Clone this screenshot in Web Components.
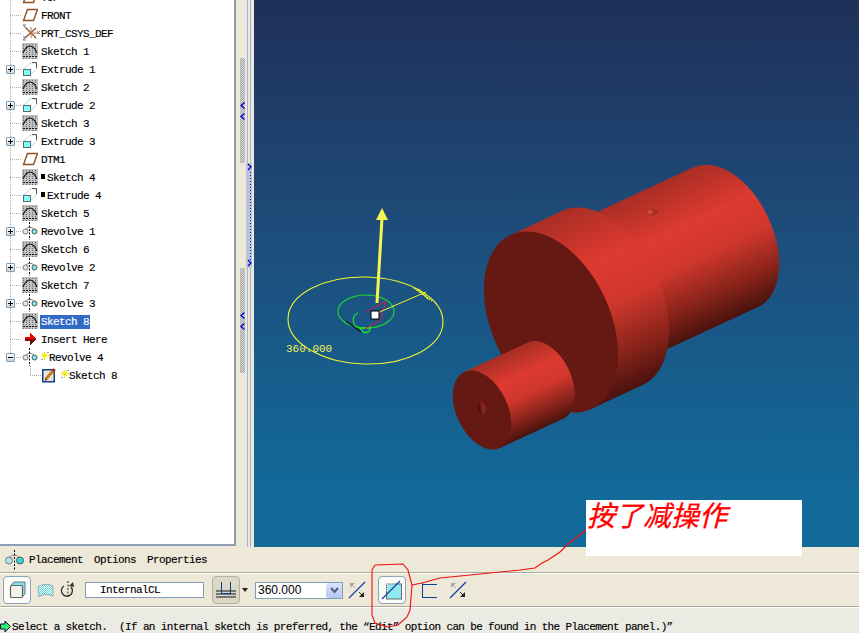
<!DOCTYPE html>
<html><head><meta charset="utf-8"><style>
html,body{margin:0;padding:0;width:859px;height:633px;overflow:hidden;background:#eee8d8}
body{font-family:"Liberation Mono",monospace;font-size:11px;letter-spacing:-.6px;color:#000;-webkit-text-stroke:.15px #000}
</style></head><body>
<cad-app>
  <model-tree slot="tree">
    <tree-row kind="plane" label="TOP"></tree-row>
    <tree-row kind="plane" label="FRONT"></tree-row>
    <tree-row kind="csys" label="PRT_CSYS_DEF"></tree-row>
    <tree-row kind="sketch" label="Sketch 1"></tree-row>
    <tree-row kind="extrude" label="Extrude 1" toggle="plus"></tree-row>
    <tree-row kind="sketch" label="Sketch 2"></tree-row>
    <tree-row kind="extrude" label="Extrude 2" toggle="plus"></tree-row>
    <tree-row kind="sketch" label="Sketch 3"></tree-row>
    <tree-row kind="extrude" label="Extrude 3" toggle="plus"></tree-row>
    <tree-row kind="plane" label="DTM1"></tree-row>
    <tree-row kind="sketch" label="Sketch 4" mark="square"></tree-row>
    <tree-row kind="extrude" label="Extrude 4" mark="square"></tree-row>
    <tree-row kind="sketch" label="Sketch 5"></tree-row>
    <tree-row kind="revolve" label="Revolve 1" toggle="plus"></tree-row>
    <tree-row kind="sketch" label="Sketch 6"></tree-row>
    <tree-row kind="revolve" label="Revolve 2" toggle="plus"></tree-row>
    <tree-row kind="sketch" label="Sketch 7"></tree-row>
    <tree-row kind="revolve" label="Revolve 3" toggle="plus"></tree-row>
    <tree-row kind="sketch" label="Sketch 8" selected></tree-row>
    <tree-row kind="insert" label="Insert Here"></tree-row>
    <tree-row kind="revolve" label="Revolve 4" toggle="minus" mark="star" guide="end"></tree-row>
    <tree-row kind="edit" label="Sketch 8" mark="star" guide="child"></tree-row>
  </model-tree>
  <pane-splitter slot="splitter"></pane-splitter>
  <model-view slot="view"></model-view>
  <dash-tabs slot="tabs"></dash-tabs>
  <dash-toolbar slot="toolbar"></dash-toolbar>
  <status-line slot="status">Select a sketch.  (If an internal sketch is preferred, the “Edit” option can be found in the Placement panel.)”</status-line>
  <red-note slot="note"></red-note>
</cad-app>
<script>
const ICONS = {
 plane:`<svg width="16" height="16" viewBox="0 0 16 16"><path d="M1.500 13.500 5.500 2.500H15.500L11.500 13.500Z" fill="none" stroke="#8f4f22" stroke-width="1.400"/></svg>`,
 csys:`<svg width="18" height="18" viewBox="0 0 18 18" style="margin-right:-2px"><path d="M3 3 14 14M3 14 14 4" stroke="#8a4a20" stroke-width="1.100"/><path d="M9 3V14M9 9H17" stroke="#b0784a" stroke-width="1"/><path d="M1 1h3M1 1l3 3M1 13h3l-3 3h3M15 7l3 3M18 7l-3 3" stroke="#777" stroke-width="1" fill="none"/></svg>`,
 sketch:`<svg width="16" height="16" viewBox="0 0 16 16" shape-rendering="crispEdges"><defs><pattern id="d" width="3" height="2" patternUnits="userSpaceOnUse"><rect width="3" height="2" fill="#c0c0c0"/><rect x="1" y="1" width="1" height="1" fill="#6a6a6a"/></pattern></defs><rect width="16" height="16" fill="url(#d)"/><path d="M1 10Q4 3 8 3T15 10" fill="none" stroke="#111" stroke-width="1.100" shape-rendering="auto"/><path d="M1 13h14" stroke="#111" stroke-dasharray="2 1"/></svg>`,
 extrude:`<svg width="16" height="16" viewBox="0 0 16 16"><path d="M2 8 8 2H14.500V8L8 14" fill="none" stroke="#a9dfe2" stroke-width="1"/><path d="M10 1.500H14.500V7" fill="none" stroke="#555" stroke-width="1"/><rect x="1.500" y="8.500" width="7" height="6" fill="#7fffff" stroke="#666"/></svg>`,
 revolve:`<svg width="16" height="18" viewBox="0 0 16 18"><path d="M3 8.500Q7 2 13 8" fill="none" stroke="#777"/><circle cx="3.500" cy="9.500" r="2.500" fill="#d8eeee" stroke="#777"/><circle cx="12.500" cy="9.500" r="2.500" fill="#7fe6ea" stroke="#555"/><path d="M7.500 0V18" stroke="#000" stroke-dasharray="2 1.500"/></svg>`,
 insert:`<svg width="16" height="16" viewBox="0 0 16 16" shape-rendering="crispEdges"><path d="M3 6H8V2L14 8H3Z" fill="#f00000"/><path d="M3 8H14L8 14V10H3Z" fill="#6e1010"/></svg>`,
 edit:`<svg width="14" height="15" viewBox="0 0 14 15"><rect x=".75" y="1.750" width="11.500" height="12" fill="#e9e4d4" stroke="#123f92" stroke-width="1.500"/><path d="M3.500 11.500 11.500 2.500" stroke="#c9791f" stroke-width="3"/><path d="M11 3 12.500 1.200" stroke="#a02020" stroke-width="3"/><path d="M2.500 13 4 10.500 5 12Z" fill="#222"/></svg>`
};
function def(name, css, html){
  customElements.define(name, class extends HTMLElement{
    constructor(){super();this.attachShadow({mode:"open"});this.shadowRoot.innerHTML=`<style>${css}</style>${typeof html==="function"?"":html}`;}
    connectedCallback(){ if(typeof html==="function"){this.shadowRoot.innerHTML=`<style>${css}</style>${html(this)}`;} }
  });
}
def("cad-app",`
:host{display:grid;width:859px;height:633px;position:relative;overflow:hidden;background:#eee8d8;
 grid-template-columns:236px 18px 1fr;grid-template-rows:547px 26px 34px 26px}
.a{grid-column:1}.b{grid-column:2}.c{grid-column:3}
.full{grid-column:1/-1;display:grid;min-width:0}
.col{display:grid;min-width:0;min-height:0}
`,`<div class="col a"><slot name="tree"></slot></div><div class="col b"><slot name="splitter"></slot></div><div class="col c"><slot name="view"></slot></div>
<div class="full"><slot name="tabs"></slot></div><div class="full"><slot name="toolbar"></slot></div><div class="full"><slot name="status"></slot></div><slot name="note"></slot>`);

def("model-tree",`
:host{display:block;background:#fff;border-right:2px solid #8c9db3;border-bottom:2px solid #8c9db3;box-sizing:border-box;height:546px;width:236px;overflow:hidden}
.in{margin-top:-12px;display:flex;flex-direction:column}
`,`<div class="in"><slot></slot></div>`);

def("tree-row",`
:host{display:flex;align-items:center;height:18px;position:relative;white-space:pre}
.lead{position:relative;width:22px;height:18px;flex:none}
.v{position:absolute;left:10px;top:0;bottom:0;width:1px;background:repeating-linear-gradient(#aaa 0 1px,transparent 1px 2px)}
.h{position:absolute;left:10px;top:9px;right:0;height:1px;background:repeating-linear-gradient(90deg,#aaa 0 1px,transparent 1px 2px)}
.end .v{bottom:9px}
.tg{position:absolute;left:6px;top:5px;width:9px;height:9px;box-sizing:border-box;border:1px solid #7b9ebd;background:linear-gradient(#fff,#d8d4c8);border-radius:1px}
.tg i{position:absolute;left:1px;top:3px;width:5px;height:1px;background:#000}
.tg b{position:absolute;left:3px;top:1px;width:1px;height:5px;background:#000}
.ic{display:flex;width:16px;height:18px;align-items:center;justify-content:flex-start;flex:none}
.t{margin:1px 0 0 2px;padding:0 1px;height:14px;line-height:14px;display:flex;align-items:center}
.sel .t{background:#316ac5;color:#fff;-webkit-text-stroke:.15px #fff}
.sq{display:inline-block;width:4px;height:5px;background:#000;margin:0 2px 3px 0}
.st{flex:none}
.child .lead{width:42px}
.child .v{display:none}
.child .h{left:30px}
.child .u{position:absolute;left:30px;top:0;height:9px;width:1px;background:repeating-linear-gradient(#aaa 0 1px,transparent 1px 2px)}
.child .ic{width:14px}
.child .t{margin-left:4px}
`,(el)=>{
 const k=el.getAttribute("kind"),tg=el.getAttribute("toggle"),m=el.getAttribute("mark"),g=el.getAttribute("guide")||"";
 const star=`<svg class="st" width="8" height="8" viewBox="0 0 8 8" shape-rendering="crispEdges" style="margin-bottom:3px"><path d="M3.500 0V8M0 3.500H8" stroke="#f0f000" stroke-width="1"/><path d="M1 1h1v1H1zM5 1h1v1H5zM1 5h1v1H1zM5 5h1v1H5zM2 2h1v1H2zM4 2h1v1H4zM2 4h1v1H2zM4 4h1v1H4z" fill="#e8e800"/><path d="M0 7h2v1H0zM6 0h2v1H6z" fill="#a8a8a8"/></svg>`;
 return `<div class="w ${g} ${el.hasAttribute("selected")?"sel":""}" style="display:flex;align-items:center;width:100%;height:18px">
 <div class="lead"><div class="v"></div><div class="u"></div><div class="h"></div>${tg?`<div class="tg"><i></i>${tg==="plus"?"<b></b>":""}</div>`:""}</div>
 <div class="ic">${ICONS[k]}</div><div class="t">${m==="square"?'<span class="sq"></span>':""}${m==="star"?star:""}<span>${el.getAttribute("label")}</span></div></div>`;
});

def("pane-splitter",`
:host{display:flex;height:547px;background:#eee8d8;position:relative;width:18px}
.grip{position:absolute;left:4px;width:5px;background:repeating-conic-gradient(#a8a8a8 0 25%,#d6d6d6 0 50%) 0 0/2px 2px;}
.g1{top:58px;height:105px}.g2{top:268px;height:105px}
.rail{position:absolute;left:11px;width:4px;border-left:1px solid #9db3dc;border-right:1px solid #9db3dc;box-sizing:border-box}
.r1{top:0;height:163px}.r3{top:268px;bottom:0}
.mid{position:absolute;left:10px;top:163px;height:105px;width:6px;background:#b9c4d6}
.dots{position:absolute;left:14px;top:172px;height:88px;width:1px;background:repeating-linear-gradient(#1414b4 0 1px,transparent 1px 3px)}
svg{position:absolute}
`,`<div class="rail r1"></div><div class="rail r3"></div><div class="mid"></div><div class="dots"></div><div class="grip g1"></div><div class="grip g2"></div>
<svg width="18" height="547" viewBox="0 0 18 547" fill="none" stroke="#0000c8" stroke-width="1.300"><path d="M8.500 102.500 5 105.500 8.500 108.500M8.500 113.500 5 116.500 8.500 119.500M8.500 312.500 5 315.500 8.500 318.500M8.500 323.500 5 326.500 8.500 329.500M12 164 15 167 12 170M12 260 15 263 12 266"/></svg>`);

const stops=`<stop offset="0" stop-color="#a92e24"/><stop offset=".32" stop-color="#de3a30"/><stop offset=".55" stop-color="#d0372c"/><stop offset=".8" stop-color="#8a241b"/><stop offset="1" stop-color="#4a120e"/>`;
def("model-view",`
:host{display:block;height:547px;background:linear-gradient(#1f3059,#1e4b79 40%,#126a9a 90%,#116a9a)}
svg{display:block}
text{font:11px "Liberation Mono",monospace;letter-spacing:0;fill:#f5f050;-webkit-text-stroke:0}
`,`<svg width="605" height="547" viewBox="254 0 605 547">
<defs>
<linearGradient id="g1" gradientUnits="userSpaceOnUse" x1="693.500" y1="167.200" x2="758.500" y2="306.800">${stops}</linearGradient>
<linearGradient id="g2" gradientUnits="userSpaceOnUse" x1="561.400" y1="211" x2="642.600" y2="385">${stops}</linearGradient>
<linearGradient id="g3" gradientUnits="userSpaceOnUse" x1="529.300" y1="342" x2="564.700" y2="418">${stops}</linearGradient>
<linearGradient id="h" x1="0" x2="1"><stop offset="0" stop-color="#3c0d0a"/><stop offset="1" stop-color="#a52c24"/></linearGradient>
</defs>
<path d="M693.500 167.200A77 47 65 0 1 758.500 306.800L648 358 584 218Z" fill="url(#g1)"/>
<ellipse cx="652" cy="212" rx="6" ry="3" fill="#a52c24"/><ellipse cx="650" cy="212" rx="3" ry="2" fill="#d8463c"/>
<path d="M561.400 211A96 59 65 0 1 642.600 385L591 409 511 235Z" fill="url(#g2)"/>
<ellipse cx="551" cy="322" rx="96" ry="59" transform="rotate(65 551 322)" fill="#661812"/>
<path d="M529.300 342A42 25.700 65 0 1 564.700 418L500 448 464 372Z" fill="url(#g3)"/>
<ellipse cx="482" cy="410" rx="42" ry="25.700" transform="rotate(65 482 410)" fill="#661812"/>
<ellipse cx="481.500" cy="408" rx="3.500" ry="7" transform="rotate(-12 481.500 408)" fill="url(#h)"/>
<ellipse cx="365.500" cy="320.500" rx="77.500" ry="43.500" transform="rotate(1.500 365.500 320.500)" fill="none" stroke="#f4f430" stroke-width="1.100"/>
<ellipse cx="366" cy="311.500" rx="28" ry="16.500" fill="none" stroke="#1fdc2c" stroke-width="1.100"/>
<path d="M358 313Q351 316 354 324 357 329 366 328" fill="none" stroke="#1fdc2c" stroke-width="1.100"/>
<path d="M360 328 Q363 334 368 332 371 330 370 326M360 328H371" fill="none" stroke="#1fdc2c" stroke-width="1.500"/>
<path d="M346 321 361 332" stroke="#101018" stroke-width="1.200"/>
<path d="M366 312 386 301 380 320 365 329" fill="none" stroke="#e0184a" stroke-width="1"/>
<path d="M377 303 382 218" stroke="#f6f650" stroke-width="3"/>
<path d="M382 208 376 220H388Z" fill="#f6f650"/>
<path d="M375 314 426 292" stroke="#f4f430" stroke-width="1"/>
<path d="M414 288 432 301M418 289 428 299" stroke="#f4f430" stroke-width="1.500" stroke-dasharray="2 1"/>
<rect x="371" y="311" width="8" height="8" fill="#fff" stroke="#000" stroke-width="1"/>
<text x="286" y="352">360.000</text>
</svg>`);

def("dash-tabs",`
:host{display:flex;align-items:center;height:26px;box-sizing:border-box;padding-left:5px;background:#eee8d8;border-bottom:1px solid #aca899;font-size:11px;white-space:pre}
svg{flex:none;margin-right:5px}
span{margin-right:10px}
.bar{display:flex;align-items:center;height:25px}
`,`<div class="bar"><svg width="19" height="20" viewBox="0 0 19 20"><path d="M4 8Q9 2 15 8" fill="none" stroke="#888"/><circle cx="4" cy="10.500" r="3.500" fill="#a8e8ea" stroke="#777"/><circle cx="15" cy="10.500" r="3.500" fill="#30d8dc" stroke="#555"/><path d="M9.500 0V20" stroke="#000" stroke-dasharray="2 1.500"/></svg><span style="margin-right:11px">Placement</span><span style="margin-right:11px">Options</span><span>Properties</span></div>`);

def("dash-button",`
:host{display:flex;flex:none;width:28px;height:28px;box-sizing:border-box;align-items:center;justify-content:center;background:#fbfbf8;border:1px solid #8aa4bd;border-radius:4px}
:host([down]){background:#dcd8c8;border-color:#b4b0a0}
`,`<slot></slot>`);

def("dash-toolbar",`
:host{display:flex;align-items:center;height:34px;box-sizing:border-box;padding-left:3px;background:#eee8d8;border-top:1px solid #fff;border-bottom:1px solid #aca899;white-space:pre}
.in{flex:none;box-sizing:border-box;height:16px;width:119px;border:1px solid #7f9db9;background:#fff;padding-left:14px;line-height:14px;font-size:11px}
.sel{flex:none;box-sizing:border-box;height:17px;width:88px;margin-left:7px;border:1px solid #7f9db9;background:#fff;display:flex;align-items:center;justify-content:space-between;font:12px "Liberation Sans",sans-serif;letter-spacing:0;-webkit-text-stroke:0}
.sel b{width:16px;height:15px;background:linear-gradient(#dbe4fb,#b4c6f1);display:flex;align-items:center;justify-content:center;border-radius:2px}
svg{flex:none;display:block}
`,`
<dash-button><svg width="20" height="20" viewBox="0 0 20 20"><path d="M4 5 7 2H18V14L15 17" fill="#7fe2e6" stroke="#778"/><rect x="3.500" y="5.500" width="12" height="12" rx="1" fill="#f4f2ea" stroke="#666" stroke-width="1.200"/></svg></dash-button>
<svg width="17" height="16" viewBox="0 0 17 16" style="margin-left:6px"><defs><pattern id="c" width="2" height="2" patternUnits="userSpaceOnUse"><rect width="2" height="2" fill="#fff"/><rect width="1" height="1" fill="#52d8dc"/><rect x="1" y="1" width="1" height="1" fill="#52d8dc"/></pattern></defs><path d="M1 5Q8 0 16 4V14Q8 10 2 15Z" fill="url(#c)" stroke="#8899aa" stroke-width=".8"/></svg>
<svg width="15" height="18" viewBox="0 0 15 18" style="margin-left:6px"><path d="M4 5A5.500 5.500 0 1 0 11 6" fill="none" stroke="#222" stroke-width="1.200"/><path d="M8 0V17" stroke="#222" stroke-dasharray="2 1.500"/><path d="M9 5 13 1 14 6Z" fill="#333"/></svg>
<div class="in" style="margin-left:10px">InternalCL</div>
<dash-button down style="margin-left:8px"><svg width="20" height="16" viewBox="0 0 20 16" shape-rendering="crispEdges"><path d="M0 9H20M0 12H20M0 15H20" stroke="#77776f" stroke-width="1.500"/><path d="M5.500 0V11.500H14.500V0" fill="none" stroke="#0c3e9c" stroke-width="1.300"/></svg></dash-button>
<svg width="6" height="4" viewBox="0 0 6 4" style="margin-left:2px"><path d="M0 0H6L3 4Z" fill="#222"/></svg>
<div class="sel"><span style="padding-left:2px">360.000</span><b><svg width="9" height="7" viewBox="0 0 9 7"><path d="M1 1 4.500 5 8 1" fill="none" stroke="#4d6185" stroke-width="2"/></svg></b></div>
<svg width="18" height="18" viewBox="0 0 18 18" style="margin-left:5px"><path d="M1 17 17 1" stroke="#1746a8" stroke-width="1.300"/><path d="M2 2H7L2 7Z" fill="#a8a8a0"/><path d="M3 3 7 7" stroke="#a8a8a0"/><path d="M16 16H11L16 11Z" fill="#222"/><path d="M11 11 15 15" stroke="#222"/></svg>
<dash-button style="margin-left:12px"><svg width="24" height="22" viewBox="0 0 24 22"><rect x="6.500" y="5" width="15" height="15" fill="#8fe8ec" stroke="#667" stroke-width="1"/><path d="M2 20 20 2" stroke="#1746a8" stroke-width="1.300"/><path d="M7 5H15M7 5V13" stroke="#fff" stroke-dasharray="1 1"/></svg></dash-button>
<svg width="16" height="15" viewBox="0 0 16 15" shape-rendering="crispEdges" style="margin-left:15px"><path d="M1 0V14H16M1 1H16" fill="none" stroke="#0c3e9c" stroke-width="1"/></svg>
<svg width="18" height="18" viewBox="0 0 18 18" style="margin-left:12px"><path d="M1 17 17 1" stroke="#1746a8" stroke-width="1.300"/><path d="M2 2H7L2 7Z" fill="#a8a8a0"/><path d="M3 3 7 7" stroke="#a8a8a0"/><path d="M16 16H11L16 11Z" fill="#222"/><path d="M11 11 15 15" stroke="#222"/></svg>
`);

def("status-line",`
:host{display:flex;align-items:center;height:26px;background:#ebeae3;border-top:1px solid #fff;box-sizing:border-box;white-space:pre;padding:12px 0 0 0;letter-spacing:-.65px}
svg{flex:none;margin-right:1px}
`,`<svg width="11" height="13" viewBox="0 0 11 13" style="margin-top:-1px"><path d="M.5 4H5V1L10.500 6.500 5 12V9H.5Z" fill="#30f070" stroke="#114" stroke-width="1"/></svg><slot></slot>`);

def("red-note",`
:host{display:block;position:absolute;left:0;top:0;width:859px;height:633px;pointer-events:none}
.box{position:absolute;left:586px;top:500px;width:216px;height:56px;background:#fff;color:#f00;font:italic 28px/28px "Noto Sans CJK SC",sans-serif;letter-spacing:0;padding-left:1px;box-sizing:border-box;-webkit-text-stroke:.3px #f00}
svg{position:absolute;left:0;top:0}
`,`<svg width="859" height="633" viewBox="0 0 859 633" fill="none" stroke="#ee1010" stroke-width="1.100"><path d="M372 570 375 565 403 564 408 570 412 585 410 610 407 617 398 625 388 627 375 623 372 615 372 570Z"/><path d="M412 585 422 583 440 578 480 574 520 570 535 568 542 563 548 560 560 552 567 545 573 540 586 530"/></svg>
<div class="box">按了减操作</div>`);
</script>
</body></html>
